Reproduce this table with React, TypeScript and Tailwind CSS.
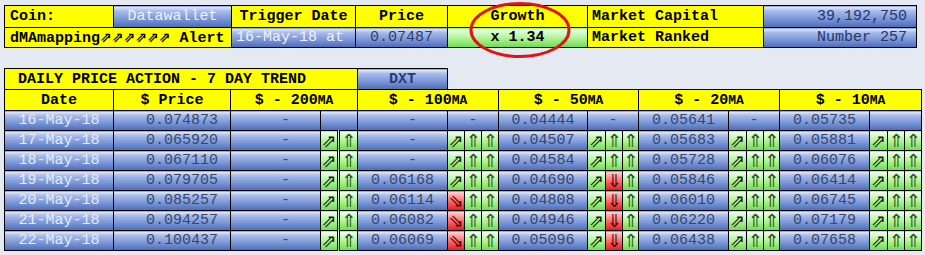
import type { ReactNode } from "react";

const mono = "[font-family:'Liberation_Mono','Courier_New',monospace]";
const blue =
  "bg-[linear-gradient(to_bottom,#eaf0fb_0%,#aabded_20%,#7f9bd8_55%,#4c6bba_100%)]";
const green =
  "bg-[linear-gradient(to_bottom,#effff0_0%,#b6f6a0_45%,#6cdd48_100%)]";
const red = "bg-[linear-gradient(to_bottom,#ffd6d6_0%,#ff6a6a_50%,#e41c1c_100%)]";
const yellow = "bg-[#ffff00]";
const cell = "border border-black p-0 leading-none whitespace-nowrap";

type MA = { v: string; a: string };
type Row = { date: string; price: string; ma: MA[] };

const rows: Row[] = [
  {
    date: "16-May-18",
    price: "0.074873",
    ma: [
      { v: "-", a: "" },
      { v: "-", a: "-" },
      { v: "0.04444", a: "-" },
      { v: "0.05641", a: "-" },
      { v: "0.05735", a: "" },
    ],
  },
  {
    date: "17-May-18",
    price: "0.065920",
    ma: [
      { v: "-", a: "uU" },
      { v: "-", a: "uUU" },
      { v: "0.04507", a: "uUU" },
      { v: "0.05683", a: "uUU" },
      { v: "0.05881", a: "uUU" },
    ],
  },
  {
    date: "18-May-18",
    price: "0.067110",
    ma: [
      { v: "-", a: "uU" },
      { v: "-", a: "uUU" },
      { v: "0.04584", a: "uUU" },
      { v: "0.05728", a: "uUU" },
      { v: "0.06076", a: "uUU" },
    ],
  },
  {
    date: "19-May-18",
    price: "0.079705",
    ma: [
      { v: "-", a: "uU" },
      { v: "0.06168", a: "uUU" },
      { v: "0.04690", a: "uDU" },
      { v: "0.05846", a: "uUU" },
      { v: "0.06414", a: "uUU" },
    ],
  },
  {
    date: "20-May-18",
    price: "0.085257",
    ma: [
      { v: "-", a: "uU" },
      { v: "0.06114", a: "dUU" },
      { v: "0.04808", a: "uDU" },
      { v: "0.06010", a: "uUU" },
      { v: "0.06745", a: "uUU" },
    ],
  },
  {
    date: "21-May-18",
    price: "0.094257",
    ma: [
      { v: "-", a: "uU" },
      { v: "0.06082", a: "dUU" },
      { v: "0.04946", a: "uDU" },
      { v: "0.06220", a: "uUU" },
      { v: "0.07179", a: "uUU" },
    ],
  },
  {
    date: "22-May-18",
    price: "0.100437",
    ma: [
      { v: "-", a: "uU" },
      { v: "0.06069", a: "dUU" },
      { v: "0.05096", a: "uDU" },
      { v: "0.06438", a: "uUU" },
      { v: "0.07658", a: "uUU" },
    ],
  },
];

const glyph: Record<string, { ch: string; bg: string; fg: string }> = {
  u: { ch: "⇗", bg: green, fg: "text-[#16220f]" },
  U: { ch: "⇑", bg: green, fg: "text-[#2a5519]" },
  d: { ch: "⇘", bg: red, fg: "text-[#3a0a0a]" },
  D: { ch: "⇓", bg: red, fg: "text-[#3a0a0a]" },
};

function ArrowCells({ a, span, first }: { a: string; span: number; first: boolean }) {
  if (a === "" || a === "-") {
    return (
      <td colSpan={span} className={`${cell} ${blue} text-center text-[#34466f]`}>
        {a}
      </td>
    );
  }
  return (
    <>
      {a.split("").map((c, i) => {
        const g = glyph[c];
        const dbl = first && i === 1 ? "border-l-[3px] border-l-black border-double" : "";
        return (
          <td
            key={i}
            className={`${cell} ${g.bg} ${g.fg} ${dbl} text-center text-[18px] [font-family:'DejaVu_Sans',sans-serif]`}
          >
            {g.ch}
          </td>
        );
      })}
    </>
  );
}

function Head({ children }: { children: ReactNode }) {
  return (
    <>
      $ - {children}
      <span className="text-[13px]">MA</span>
    </>
  );
}

function MACells({ m, first }: { m: MA; first: boolean }) {
  const dash = m.v === "-";
  return (
    <>
      <td className={`${cell} ${blue} text-center text-[#34466f] ${dash ? "pl-[20px]" : ""}`}>{m.v}</td>
      <ArrowCells a={m.a} span={first ? 2 : 3} first={first} />
    </>
  );
}

export default function App() {
  return (
    <div className={`relative w-[925px] h-[255px] bg-[#e4e9f2] ${mono} text-[15px] pt-[5px] pl-[4px]`}>
      <table className="border-collapse table-fixed w-[912px]">
        <colgroup>
          <col className="w-[109px]" />
          <col className="w-[118px]" />
          <col className="w-[124px]" />
          <col className="w-[92px]" />
          <col className="w-[140px]" />
          <col className="w-[176px]" />
          <col className="w-[153px]" />
        </colgroup>
        <tbody>
          <tr className="h-[22px]">
            <td className={`${cell} ${yellow} font-bold pl-[5px]`}>Coin:</td>
            <td className={`${cell} ${blue} text-center text-[#eef2fb]`}>Datawallet</td>
            <td className={`${cell} ${yellow} font-bold text-center`}>Trigger Date</td>
            <td className={`${cell} ${yellow} font-bold text-center`}>Price</td>
            <td className={`${cell} ${yellow} font-bold text-center`}>Growth</td>
            <td className={`${cell} ${yellow} font-bold pl-[4px]`}>Market Capital</td>
            <td className={`${cell} ${blue} text-right pr-[9px] text-[#24366a]`}>39,192,750</td>
          </tr>
          <tr className="h-[20px]">
            <td colSpan={2} className={`${cell} ${yellow} font-bold pl-[5px]`}>
              dMAmapping<span className="[font-family:'DejaVu_Sans',sans-serif] text-[14px]">⇗⇗⇗⇗⇗⇗</span> Alert
            </td>
            <td className={`${cell} ${blue} pl-[4px] text-[#eef2fb]`}>16-May-18 at</td>
            <td className={`${cell} ${blue} text-center text-[#2c3d70]`}>0.07487</td>
            <td className={`${cell} ${green} font-bold text-center`}>x 1.34</td>
            <td className={`${cell} ${yellow} font-bold pl-[4px]`}>Market Ranked</td>
            <td className={`${cell} ${blue} text-right pr-[9px] text-[#24366a]`}>Number 257</td>
          </tr>
        </tbody>
      </table>

      <table className="border-collapse table-fixed w-[917px] mt-[20px]">
        <colgroup>
          <col className="w-[109px]" />
          <col className="w-[117px]" />
          <col className="w-[90px]" />
          <col className="w-[18px]" />
          <col className="w-[19px]" />
          <col className="w-[90px]" />
          <col className="w-[17px]" />
          <col className="w-[17px]" />
          <col className="w-[17px]" />
          <col className="w-[89px]" />
          <col className="w-[18px]" />
          <col className="w-[17px]" />
          <col className="w-[16px]" />
          <col className="w-[90px]" />
          <col className="w-[18px]" />
          <col className="w-[17px]" />
          <col className="w-[16px]" />
          <col className="w-[90px]" />
          <col className="w-[18px]" />
          <col className="w-[17px]" />
          <col className="w-[17px]" />
        </colgroup>
        <tbody>
          <tr className="h-[21px]">
            <td colSpan={5} className={`${cell} ${yellow} font-bold pl-[13px]`}>
              DAILY PRICE ACTION - 7 DAY TREND
            </td>
            <td className={`${cell} ${blue} font-bold text-center text-[#2a3c78]`}>DXT</td>
            <td colSpan={15} className="p-0" />
          </tr>
          <tr className="h-[21px]">
            <td className={`${cell} ${yellow} font-bold text-center`}>Date</td>
            <td className={`${cell} ${yellow} font-bold text-center`}>$ Price</td>
            <td colSpan={3} className={`${cell} ${yellow} font-bold text-center`}>
              <Head>200</Head>
            </td>
            <td colSpan={4} className={`${cell} ${yellow} font-bold text-center`}>
              <Head>100</Head>
            </td>
            <td colSpan={4} className={`${cell} ${yellow} font-bold text-center`}>
              <Head>50</Head>
            </td>
            <td colSpan={4} className={`${cell} ${yellow} font-bold text-center`}>
              <Head>20</Head>
            </td>
            <td colSpan={4} className={`${cell} ${yellow} font-bold text-center`}>
              <Head>10</Head>
            </td>
          </tr>
          {rows.map((r) => (
            <tr key={r.date} className="h-[20px]">
              <td className={`${cell} ${blue} text-center text-[#e6ecf9]`}>{r.date}</td>
              <td className={`${cell} ${blue} text-right pr-[12px] text-[#34466f]`}>{r.price}</td>
              {r.ma.map((m, i) => (
                <MACells key={i} m={m} first={i === 0} />
              ))}
            </tr>
          ))}
        </tbody>
      </table>

      <svg className="absolute left-[468px] top-[1px]" width="104" height="58" viewBox="0 0 104 58">
        <ellipse cx="52" cy="29" rx="49" ry="26.5" fill="none" stroke="#e01414" strokeWidth="3" />
      </svg>
    </div>
  );
}
